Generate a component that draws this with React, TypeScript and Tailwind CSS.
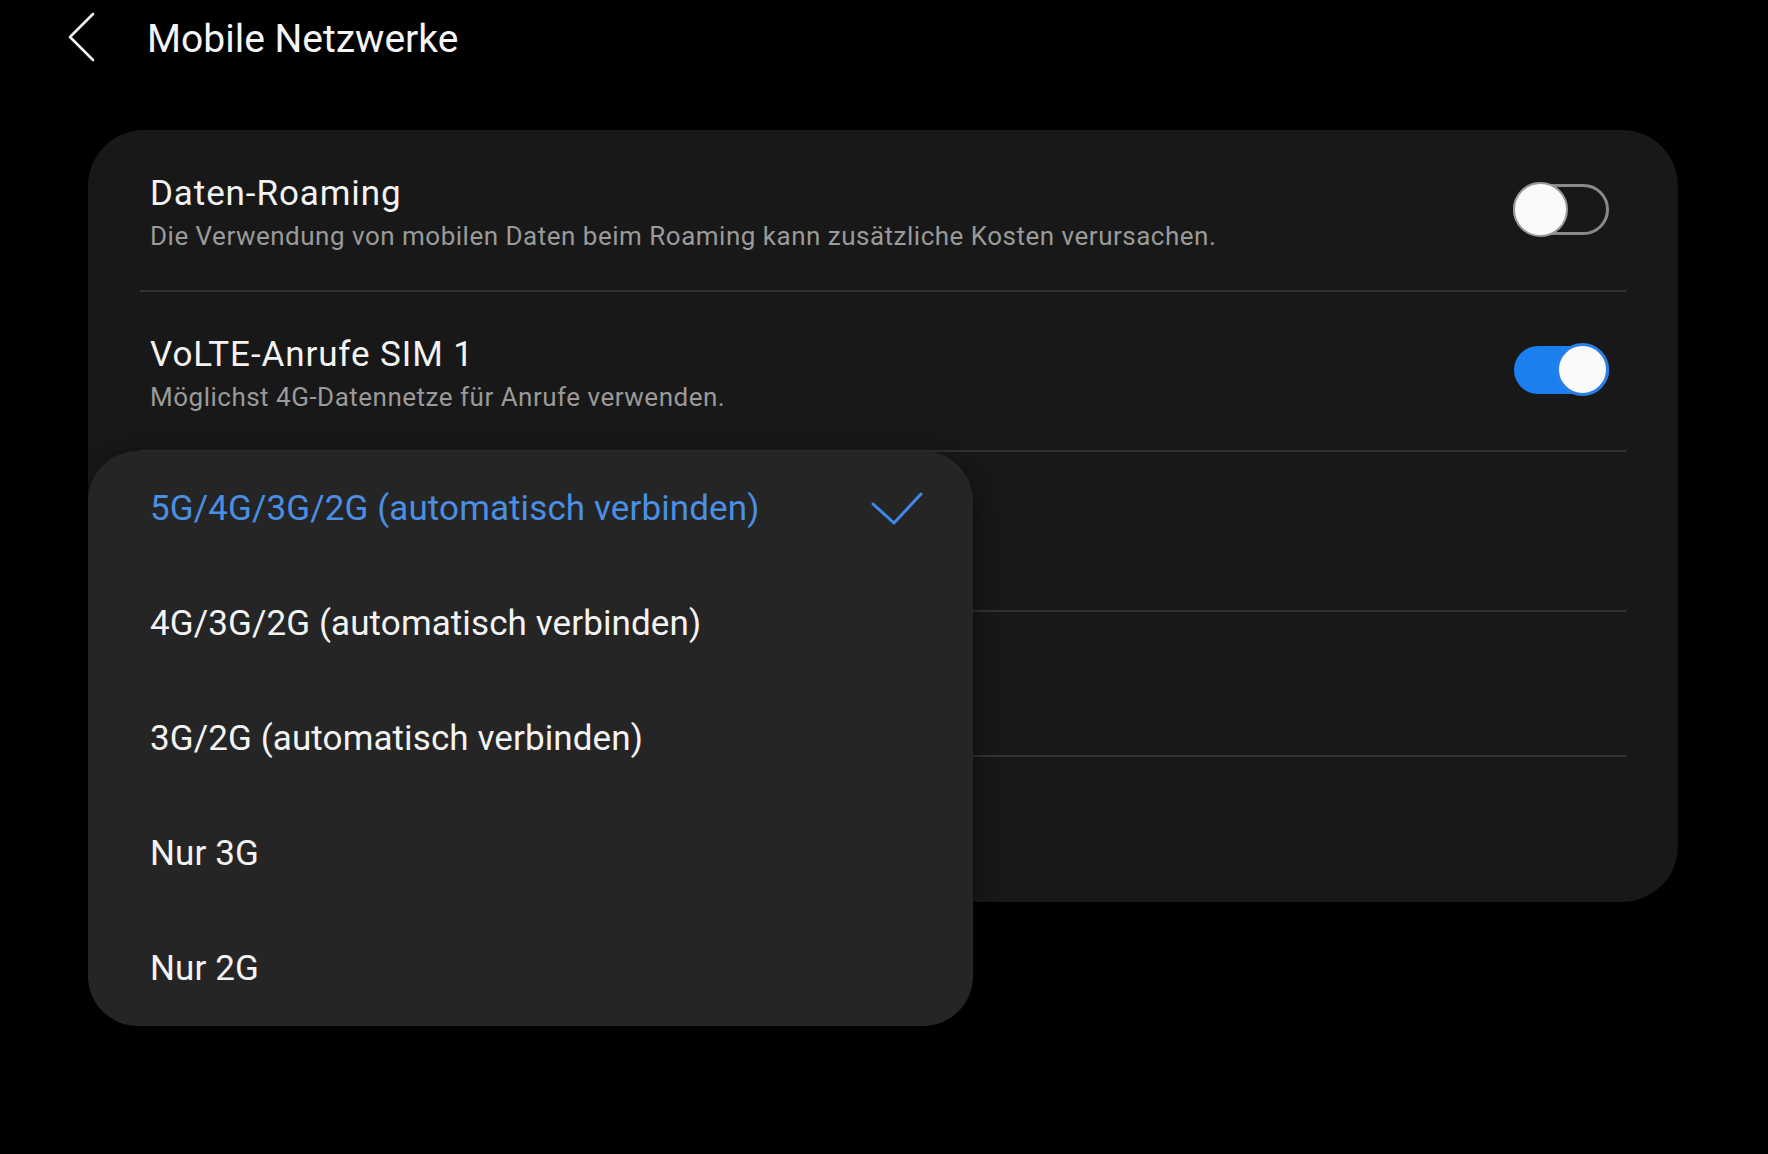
import { useState } from "react";

const NETWORK_MODES = [
  "5G/4G/3G/2G (automatisch verbinden)",
  "4G/3G/2G (automatisch verbinden)",
  "3G/2G (automatisch verbinden)",
  "Nur 3G",
  "Nur 2G",
];

function Toggle({ on }: { on: boolean }) {
  if (on) {
    return (
      <div className="relative -mt-[4px] h-[53px] w-[95px] shrink-0">
        <div className="absolute inset-x-0 top-[3px] h-[48px] rounded-full bg-[#1b7ff0]" />
        <div className="absolute right-0 top-0 size-[53px] rounded-full border-[3px] border-[#2a7fe6] bg-[#fafafa]" />
      </div>
    );
  }
  return (
    <div className="relative -mt-[2px] h-[55px] w-[96px] shrink-0">
      <div className="absolute inset-x-0 top-[2px] h-[51px] rounded-full border-[3px] border-[#8a8a8a]" />
      <div className="absolute left-0 top-0 size-[55px] rounded-full border-2 border-[#9a9a9a] bg-[#fafafa]" />
    </div>
  );
}

function Row({
  title,
  subtitle,
  toggle,
  height,
}: {
  title?: string;
  subtitle?: string;
  toggle?: boolean;
  height: string;
}) {
  return (
    <div className={`flex items-center justify-between pl-[62px] pr-[69px] ${height}`}>
      <div className="flex flex-col pt-[5px]">
        {title && (
          <span className="text-[35px] leading-[40px] tracking-[0.9px] text-[#f3f3f3]">{title}</span>
        )}
        {subtitle && (
          <span className="mt-[6px] text-[26px] leading-[32px] tracking-[0.5px] text-[#9a9a9a]">
            {subtitle}
          </span>
        )}
      </div>
      {toggle !== undefined && <Toggle on={toggle} />}
    </div>
  );
}

function Divider() {
  return <div className="mx-[52px] h-[2px] bg-[#323232]" />;
}

export default function App() {
  const [selected, setSelected] = useState(0);

  return (
    <div className="min-h-screen w-full bg-black font-['Roboto','Noto_Sans',sans-serif]">
      <header className="flex h-[74px] items-center">
        <button aria-label="Zurück" className="ml-[66px] flex h-[50px] w-[30px] items-center">
          <svg width="30" height="50" viewBox="0 0 30 50" fill="none">
            <path d="M27 2 L4 25 L27 48" stroke="#f2f2f2" strokeWidth="2.6" strokeLinecap="round" strokeLinejoin="round" />
          </svg>
        </button>
        <h1 className="ml-[51px] mt-[4px] text-[39px] leading-[48px] text-[#f5f5f5]">Mobile Netzwerke</h1>
      </header>

      <div className="relative ml-[88px] mr-[90px] mt-[56px]">
        <div className="overflow-hidden rounded-[56px] bg-[#181818]">
          <Row
            title="Daten-Roaming"
            subtitle="Die Verwendung von mobilen Daten beim Roaming kann zusätzliche Kosten verursachen."
            toggle={false}
            height="h-[160px]"
          />
          <Divider />
          <Row
            title="VoLTE-Anrufe SIM 1"
            subtitle="Möglichst 4G-Datennetze für Anrufe verwenden."
            toggle={true}
            height="h-[158px]"
          />
          <Divider />
          <Row height="h-[158px]" />
          <Divider />
          <Row height="h-[143px]" />
          <Divider />
          <Row height="h-[145px]" />
        </div>

        {/* network mode menu */}
        <div className="absolute left-0 top-[321px] w-[885px] overflow-hidden rounded-[50px] bg-[#252525] shadow-[0_6px_24px_rgba(0,0,0,0.45)]">
          {NETWORK_MODES.map((mode, i) => (
            <button
              key={mode}
              onClick={() => setSelected(i)}
              className="flex h-[115px] w-full items-center justify-between pl-[62px] pr-[50px] text-left"
            >
              <span
                className={`text-[35px] leading-[44px] tracking-[0.1px] ${
                  i === selected ? "text-[#4a8fe4]" : "text-[#f3f3f3]"
                }`}
              >
                {mode}
              </span>
              {i === selected && (
                <svg width="52" height="34" viewBox="0 0 52 34" fill="none">
                  <path d="M2 12 L23 31 L50 2" stroke="#3f8ae9" strokeWidth="3" strokeLinecap="round" strokeLinejoin="round" />
                </svg>
              )}
            </button>
          ))}
        </div>
      </div>
    </div>
  );
}
